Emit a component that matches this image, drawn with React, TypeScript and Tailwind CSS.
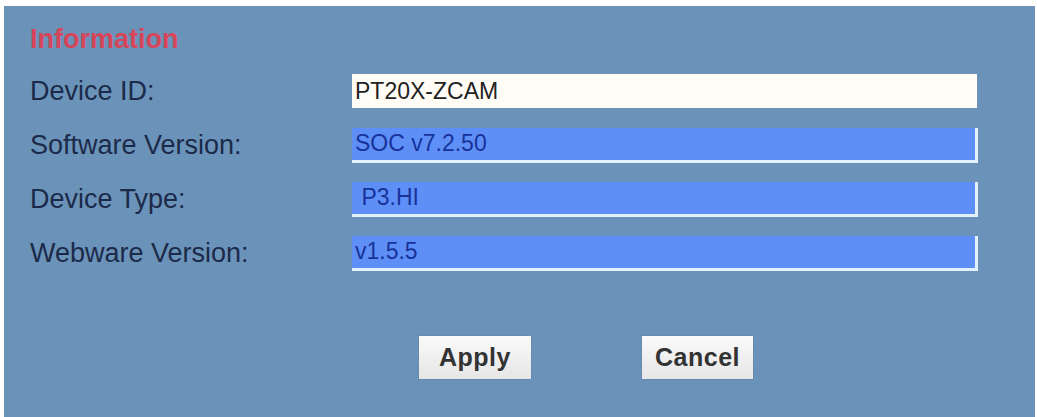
const fields = [
  { label: "Device ID:", value: "PT20X-ZCAM", editable: true },
  { label: "Software Version:", value: "SOC v7.2.50", editable: false },
  { label: "Device Type:", value: " P3.HI", editable: false },
  { label: "Webware Version:", value: "v1.5.5", editable: false },
];

function InfoRow(props: { label: string; value: string; editable: boolean }) {
  return (
    <div className="flex h-[34px] items-center">
      <div className="w-[348px] pl-[26px] text-[27px] leading-none text-[#1c2a4a]">
        {props.label}
      </div>
      {props.editable ? (
        <div className="flex h-[34px] w-[625px] items-center bg-[#fffdf6] pl-[3px] text-[23px] text-[#222]">
          {props.value}
        </div>
      ) : (
        <div className="flex h-[35px] w-[626px] items-center whitespace-pre border-r-[3px] border-b-[3px] border-[#e2f1fb] bg-[#5e8ff6] pl-[3px] text-[23px] text-[#17339a]">
          {props.value}
        </div>
      )}
    </div>
  );
}

export default function App() {
  return (
    <div
      className="h-[417px] w-[1037px] bg-white pt-[6px] pl-[4px] pr-[2px]"
      style={{ fontFamily: '"Liberation Sans", Arial, sans-serif' }}
    >
      <div className="h-full bg-[#6b93b9]">
        <div className="pt-[20px] pl-[26px] text-[27px] leading-none font-bold text-[#d6455a]">
          Information
        </div>
        <div className="mt-[21px] flex flex-col gap-[20px]">
          {fields.map((f) => (
            <InfoRow key={f.label} label={f.label} value={f.value} editable={f.editable} />
          ))}
        </div>
        <div className="mt-[66px] flex pl-[415px] gap-[111px]">
          <button className="h-[43px] w-[112px] bg-gradient-to-b from-[#fafafa] to-[#e6e6e6] text-[25px] font-bold tracking-[0.5px] text-[#333] shadow-[0_0_1px_rgba(0,0,0,0.3)]">
            Apply
          </button>
          <button className="h-[43px] w-[111px] bg-gradient-to-b from-[#fafafa] to-[#e6e6e6] text-[25px] font-bold tracking-[0.5px] text-[#333] shadow-[0_0_1px_rgba(0,0,0,0.3)]">
            Cancel
          </button>
        </div>
      </div>
    </div>
  );
}
